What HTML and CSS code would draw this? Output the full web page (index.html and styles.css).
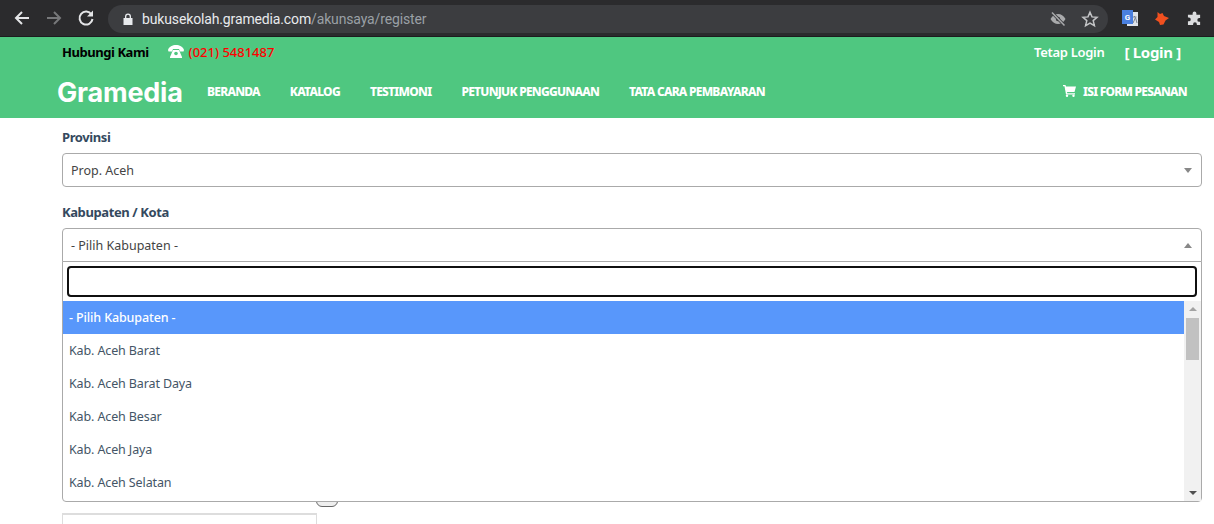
FILE: index.html
```html
<!DOCTYPE html>
<html lang="id">
<head>
<meta charset="utf-8">
<title>Register</title>
<link rel="stylesheet" href="styles.css">
</head>
<body>
<div class="chrome">
  <svg class="nav-icon" width="18" height="18" viewBox="0 0 18 18"><path d="M16 9H3.500M9 3 3 9l6 6" fill="none" stroke="#e4e5e7" stroke-width="2"/></svg>
  <svg class="nav-icon" width="18" height="18" viewBox="0 0 18 18"><path d="M2 9h12.500M9 3l6 6-6 6" fill="none" stroke="#77787a" stroke-width="2"/></svg>
  <svg class="nav-icon" width="18" height="18" viewBox="0 0 18 18"><path d="M14.500 5.500A6.500 6.500 0 1 0 15.500 10" fill="none" stroke="#e4e5e7" stroke-width="2"/><path d="M16 1.500V7.500H10z" fill="#e4e5e7"/></svg>
  <div class="omnibox">
    <svg width="10" height="12" viewBox="0 0 10 12"><path d="M2 5V3.500a3 3 0 0 1 6 0V5h1.500v7H.5V5zM3.300 5h3.400V3.500a1.700 1.700 0 0 0-3.400 0z" fill="#e8eaed"/></svg>
    <div class="url"><span class="url-host">bukusekolah.gramedia.com</span><span class="url-path">/akunsaya/register</span></div>
    <div class="omni-icons">
      <svg width="18" height="18" viewBox="0 0 18 18"><path d="M1.500 9C3.500 5.500 6 4 9 4s5.500 1.500 7.500 5c-2 3.500-4.500 5-7.500 5S3.500 12.500 1.500 9z" fill="#a9aaac"/><circle cx="9" cy="9" r="2.200" fill="#3c3d40"/><path d="M3 2.500l12.500 13" stroke="#3c3d40" stroke-width="3.200"/><path d="M3 2.500l12.500 13" stroke="#a9aaac" stroke-width="1.500"/></svg>
      <svg width="18" height="18" viewBox="0 0 18 18"><path d="M9 2.200l2 4.700 5 .4-3.800 3.300 1.200 5L9 13l-4.400 2.600 1.200-5L2 7.300l5-.4z" fill="none" stroke="#c4c5c7" stroke-width="1.500"/></svg>
    </div>
  </div>
  <div class="ext-icons">
    <svg width="16" height="16" viewBox="0 0 16 16"><rect x="5" y="2" width="11" height="14" fill="#dfe3ea"/><path d="M10.500 7h4M12.500 6v1M11 13l2.500-5.500L15 13" stroke="#7a8290" stroke-width="1" fill="none"/><rect width="11" height="14" fill="#4a80e0"/><text class="ext-g" x="5.500" y="10" text-anchor="middle">G</text></svg>
    <svg width="14" height="13" viewBox="0 0 14 13"><path d="M2.500 0l2.500 2 2.500-1 1.500 3L14 6l-3.500 2.500L8.500 12.500 5 13 4 10 0 7.500 2.500 5z" fill="#f1501f"/></svg>
    <svg class="ext-puzzle" width="15" height="15" viewBox="0 0 16 16"><path d="M6 2.500a2 2 0 0 1 4 0V4h4v3.500h-1a2 2 0 0 0 0 4h1V15h-3.500v-1a2 2 0 0 0-4 0v1H1v-4h1a2 2 0 0 0 0-4H1V4h5z" fill="#dcdddf"/></svg>
  </div>
</div>

<header class="site-header">
  <div class="topbar">
    <div class="contact">
      <span class="contact-label">Hubungi Kami</span>
      <svg class="phone" width="16" height="13" viewBox="0 0 16 13"><path d="M0 5C1 1.500 4.500 0 8 0s7 1.500 8 5l-.5 1.500h-3.500L11 4H5L4 6.500H.5z" fill="#fff"/><path d="M5 5h6l3 7v1H2v-1z" fill="#fff"/><circle cx="8" cy="8.500" r="1.800" fill="#4fc780"/></svg>
      <span class="contact-phone">(021) 5481487</span>
    </div>
    <div class="login-links">
      <span class="keep-login">Tetap Login</span>
      <span class="login">[ Login ]</span>
    </div>
  </div>
  <nav class="navbar">
    <span class="logo">Gramedia</span>
    <div class="nav-links">
      <a>BERANDA</a>
      <a>KATALOG</a>
      <a>TESTIMONI</a>
      <a>PETUNJUK PENGGUNAAN</a>
      <a>TATA CARA PEMBAYARAN</a>
    </div>
    <a class="order">
      <svg width="13" height="12" viewBox="0 0 13 12"><path d="M0 0h2.500l.5 1.500h10L11.500 7H4l.3 1.300H12v1.200H3L1.500 1.300H0z" fill="#fff"/><circle cx="4" cy="10.800" r="1.200" fill="#fff"/><circle cx="10.500" cy="10.800" r="1.200" fill="#fff"/></svg>
      ISI FORM PESANAN
    </a>
  </nav>
</header>

<main class="form">
  <div class="field">
    <label class="field-label">Provinsi</label>
    <div class="select">
      <span>Prop. Aceh</span>
      <i class="caret caret-down"></i>
    </div>
  </div>
  <div class="field">
    <label class="field-label">Kabupaten / Kota</label>
    <div class="select-wrap">
      <div class="select select-open">
        <span>- Pilih Kabupaten -</span>
        <i class="caret caret-up"></i>
      </div>
      <div class="dropdown">
        <div class="search-row"><div class="search"></div></div>
        <div class="list">
          <ul class="options">
            <li class="option option-active">- Pilih Kabupaten -</li>
            <li class="option">Kab. Aceh Barat</li>
            <li class="option">Kab. Aceh Barat Daya</li>
            <li class="option">Kab. Aceh Besar</li>
            <li class="option">Kab. Aceh Jaya</li>
            <li class="option">Kab. Aceh Selatan</li>
          </ul>
          <div class="scrollbar">
            <i class="sb-arrow sb-up"></i>
            <div class="sb-thumb"></div>
            <i class="sb-arrow sb-down"></i>
          </div>
        </div>
      </div>
    </div>
  </div>
  <div class="below">
    <div class="captcha-btn"></div>
    <div class="captcha-input"></div>
  </div>
</main>
</body>
</html>
```
FILE: styles.css
```css
* { box-sizing: border-box; }
html, body { margin: 0; height: 524px; overflow: hidden; }
body { font-family: "Noto Sans", "Open Sans", sans-serif; background: #fff; color: #34495e; }

.chrome { height: 37px; background: #2b2b2d; border-bottom: 1px solid #1c1c1e; display: flex; align-items: center; padding-left: 13px; }
.nav-icon { margin-right: 14px; flex: none; }
.nav-icon:nth-child(3) { margin-right: 13px; }
.omnibox { width: 1000px; height: 28px; border-radius: 14px; background: #3c3d40; display: flex; align-items: center; padding: 0 9px 0 15px; margin-top: 1px; }
.url { font-family: "Roboto", sans-serif; font-size: 14px; margin-left: 9px; flex: 1; letter-spacing: -0.14px; }
.url-host { color: #e8eaed; }
.url-path { color: #9aa0a6; }
.omni-icons { display: flex; gap: 14px; }
.ext-icons { display: flex; align-items: center; gap: 17px; margin-left: 14px; }
.ext-puzzle { margin-left: 1px; }
.ext-g { font: bold 8px "Roboto", sans-serif; fill: #fff; }

.site-header { height: 81px; background: #4fc780; padding: 0 27px 0 57px; color: #fff; }
.topbar { height: 29px; display: flex; justify-content: space-between; align-items: center; padding: 0 6px 0 5px; }
.contact { display: flex; align-items: center; font-size: 13px; font-weight: 700; }
.contact-label { color: #000; letter-spacing: -0.45px; }
.phone { margin: 0 5px 0 19px; }
.contact-phone { color: #f00; font-weight: 500; }
.login-links { display: flex; align-items: center; gap: 20px; }
.keep-login { font-size: 13px; font-weight: 600; letter-spacing: -0.3px; }
.login { font-size: 15px; font-weight: 700; letter-spacing: -0.3px; }
.navbar { height: 50px; display: flex; align-items: center; }
.logo { font-family: "Inter", sans-serif; font-weight: 700; font-size: 27px; letter-spacing: -0.2px; width: 150px; padding-top: 3px; }
.nav-links { display: flex; gap: 30px; flex: 1; }
.nav-links a, .order { font-size: 12px; font-weight: 800; letter-spacing: -0.75px; }
.order { display: flex; align-items: center; gap: 7px; }

.form { padding: 0 12px 0 62px; }
.field { padding-top: 9px; }
.field + .field { padding-top: 15px; }
.field-label { display: block; font-size: 13px; font-weight: 700; line-height: 20px; color: #34495e; margin-bottom: 6px; letter-spacing: -0.4px; }
.select { height: 34px; border: 1px solid #aaa; border-radius: 4px; display: flex; align-items: center; justify-content: space-between; padding: 0 9px 0 8px; font-size: 12.500px; color: #444; background: #fff; }
.select-open { border-radius: 4px 4px 0 0; }
.select-wrap { position: relative; }
.caret { width: 0; height: 0; border-left: 4px solid transparent; border-right: 4px solid transparent; }
.caret-down { border-top: 5px solid #888; }
.caret-up { border-bottom: 5px solid #888; }

.dropdown { position: absolute; left: 0; right: 0; top: 33px; height: 241px; background: #fff; border: 1px solid #aaa; border-radius: 0 0 4px 4px; z-index: 2; }
.search-row { padding: 4px; }
.search { height: 31px; border: 2px solid #101010; border-radius: 4px; background: #fff; }
.list { display: flex; height: 200px; }
.options { list-style: none; margin: 0; padding: 0; flex: 1; min-width: 0; }
.option { height: 33px; padding: 0 6px; display: flex; align-items: center; font-size: 12.500px; letter-spacing: -0.12px; color: #445566; }
.option-active { background: #5897fb; color: #fff; font-weight: 500; }
.scrollbar { width: 17px; background: #f1f1f1; position: relative; padding-top: 17px; }
.sb-thumb { width: 13px; height: 42px; background: #c1c1c1; margin-left: 2px; }
.sb-arrow { position: absolute; left: 5px; width: 0; height: 0; border-left: 4px solid transparent; border-right: 4px solid transparent; }
.sb-up { top: 6px; border-bottom: 4px solid #a3a3a3; }
.sb-down { bottom: 6px; border-top: 4px solid #505050; }

.below { height: 263px; overflow: hidden; padding-top: 228px; }
.captcha-btn { width: 22px; height: 17px; margin-left: 254px; border: 1px solid #666; border-radius: 6px; background: #eee; }
.captcha-input { width: 255px; height: 40px; margin-top: 6px; border: 1px solid #ddd; border-top-width: 2px; }
```
